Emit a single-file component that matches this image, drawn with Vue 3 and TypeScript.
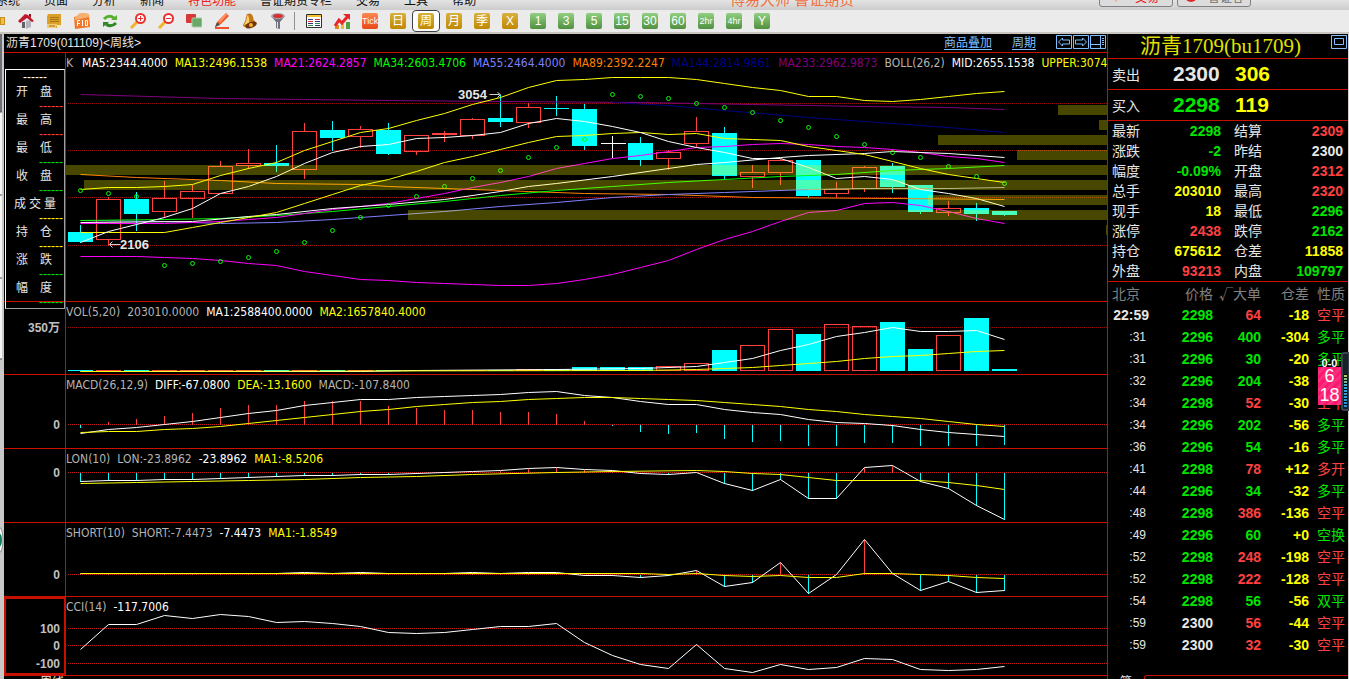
<script setup lang="ts">
type Tone = 'red' | 'green' | 'yellow' | 'white'
interface Legend { text: string; color: string }
interface Level { y: number; label?: string; dark?: boolean }
interface Line { color: string; pts: [number, number][] }
interface Stick { i: number; y: number; up: boolean }
interface Pane { id: string; top: number; height: number; legend: Legend[]; levels: Level[]; zero: number; lines: Line[]; sticks: Stick[] }

const RED = '#ff4040'
const CYAN = '#00ffff'
const GRAY = '#b4b4b4'
const WHITE = '#ffffff'
const YELLOW = '#ffff00'

const menus = ['系统', '页面', '分析', '新闻', '特色功能', '鲁证期货专栏', '交易', '工具', '帮助']
const periods = ['日', '周', '月', '季', 'X']
const minutes = ['1', '3', '5', '15', '30', '60', '2hr', '4hr', 'Y']

const xAt = (i: number) => 80 + 28 * i
const seq = (ys: number[], from = 0): [number, number][] => ys.map((y, k) => [from + k, y])
const path = (pts: [number, number][]) => pts.map(([i, y]) => `${xAt(i)},${y}`).join(' ')
const sticksTo = (ys: number[], zero: number): Stick[] =>
  ys.map((y, i) => ({ i, y, up: y < zero })).filter((s) => s.y !== zero)

// high, body top, body bottom, low, kind (r: rising, f: falling, n: unchanged)
const candles: [number, number, number, number, string][] = [
  [224, 232, 242, 242, 'f'], [196, 199, 239, 245, 'r'], [191, 199, 214, 230, 'f'], [180, 198, 211, 217, 'r'],
  [184, 191, 198, 217, 'r'], [160, 166, 193, 193, 'r'], [148, 163, 165, 168, 'r'], [144, 163, 166, 171, 'f'],
  [122, 131, 169, 178, 'r'], [120, 130, 138, 150, 'f'], [125, 129, 136, 147, 'r'], [122, 130, 154, 154, 'f'],
  [134, 135, 151, 154, 'r'], [130, 133, 134, 141, 'r'], [117, 119, 135, 138, 'r'], [94, 118, 122, 126, 'f'],
  [102, 107, 122, 127, 'r'], [95, 108, 109, 115, 'f'], [103, 109, 146, 149, 'f'], [135, 143, 144, 157, 'n'],
  [136, 143, 160, 165, 'f'], [149, 152, 158, 169, 'r'], [116, 131, 143, 147, 'r'], [126, 133, 176, 179, 'f'],
  [164, 172, 176, 187, 'r'], [158, 160, 172, 184, 'r'], [159, 160, 196, 197, 'f'], [181, 189, 193, 197, 'r'],
  [165, 167, 188, 191, 'r'], [162, 166, 187, 192, 'f'], [184, 185, 212, 213, 'f'], [200, 208, 212, 215, 'r'],
  [202, 208, 214, 220, 'f'], [210, 211, 215, 215, 'f'],
]

const volumeTops = [370, 370, 370, 370, 370, 370, 370, 370, 370, 370, 370, 370, 370, 370, 370, 370, 369, 369, 367, 367, 367, 366, 363, 350, 345, 329, 334, 324, 326, 322, 349, 335, 318, 369]

// x, y, with up to the right edge of the plot
const zones: [number, number][] = [
  [1058, 105], [1099, 120], [938, 135], [1017, 150], [66, 165], [84, 180], [928, 195], [408, 210], [1106, 225],
]

const sar = [190, 193, 196, 265, 263, 261, 257, 251, 242, 230, 217, 205, 196, 186, 178, 170, 157, 147, 139, 94, 96, 98, 103, 107, 112, 120, 127, 136, 144, 152, 157, 166, 176, 183]

const mainLines: Line[] = [
  { color: '#800080', pts: [[0, 94], [5, 98], [11, 100], [15, 101], [20, 102], [24, 104], [28, 106], [31, 107], [33, 109]] },
  { color: '#000080', pts: [[19, 102], [21, 105], [23, 110], [26, 117], [28, 121], [31, 127], [33, 132]] },
  { color: '#ff8000', pts: [[0, 174], [2, 177], [5, 180], [7, 183], [10, 184], [11, 186], [13, 188], [16, 191], [18, 193], [21, 194], [24, 197], [29, 198], [33, 199]] },
  { color: '#8080ff', pts: [[0, 220], [3, 221], [5, 223], [7, 222], [9, 219], [11, 215], [13, 211], [15, 206], [17, 202], [19, 197], [21, 194], [23, 192], [26, 189]] },
  { color: '#a0a0b0', pts: [[26, 189], [28, 188], [31, 188], [33, 187]] },
  { color: '#00ff00', pts: [[0, 220], [3, 219], [5, 218], [7, 215], [9, 211], [11, 206], [13, 201], [15, 195], [17, 190], [19, 186], [21, 182], [23, 179], [25, 176], [27, 174], [29, 170], [31, 168], [33, 165]] },
  { color: '#ff00ff', pts: seq([223, 223, 223, 223, 222, 221, 219, 217, 213, 209, 206, 203, 198, 193, 187, 182, 176, 168, 163, 158, 155, 151, 147, 146, 144, 143, 144, 146, 147, 149, 152, 156, 158, 162]) },
  { color: WHITE, pts: [[0, 222], [4, 221], [6, 216], [7, 214], [9, 208], [11, 204], [13, 199], [15, 191], [16, 186], [17, 183], [19, 176], [21, 168], [22, 164], [23, 162], [25, 157], [26, 155], [28, 153], [29, 151], [31, 153], [33, 157]] },
  { color: '#ff00ff', pts: seq([256, 256, 256, 257, 258, 260, 263, 265, 271, 275, 279, 280, 282, 283, 284, 285, 285, 283, 279, 274, 267, 260, 249, 239, 231, 221, 212, 210, 203, 202, 205, 211, 218, 223]) },
  { color: YELLOW, pts: seq([189, 187, 187, 186, 184, 175, 168, 162, 150, 141, 132, 128, 120, 113, 104, 97, 87, 80, 79, 77, 77, 77, 79, 83, 87, 90, 96, 96, 100, 101, 99, 96, 93, 91]) },
  { color: YELLOW, pts: seq([232, 232, 232, 232, 227, 222, 217, 212, 203, 194, 185, 179, 171, 162, 156, 149, 142, 136, 135, 133, 132, 134, 133, 138, 139, 140, 146, 150, 154, 161, 168, 174, 178, 182]) },
  { color: WHITE, pts: seq([242, 231, 224, 217, 208, 193, 186, 176, 163, 152, 146, 144, 138, 137, 135, 132, 123, 118, 121, 126, 132, 141, 147, 152, 158, 158, 167, 178, 176, 179, 189, 193, 198, 206]) },
]

const lon = [481, 480, 480, 479, 479, 478, 477, 476, 475, 475, 474, 474, 473, 472, 471, 470, 468, 467, 469, 470, 473, 474, 472, 483, 490, 479, 498, 498, 467, 465, 481, 488, 505, 519]
const short = [573, 573, 573, 573, 573, 573, 573, 573, 572, 573, 572, 573, 573, 573, 572, 573, 572, 572, 575, 575, 577, 575, 570, 586, 582, 562, 593, 574, 539, 573, 590, 581, 592, 590]
const macdHist = [427, 421, 418, 415, 412, 407, 404, 404, 400, 400, 400, 405, 407, 409, 409, 411, 411, 413, 420, 425, 431, 433, 432, 438, 441, 440, 445, 445, 442, 442, 445, 445, 445, 444]

const mainLegend: Legend[] = [
  { text: 'K', color: GRAY },
  { text: 'MA5:2344.4000', color: WHITE },
  { text: 'MA13:2496.1538', color: YELLOW },
  { text: 'MA21:2624.2857', color: '#ff00ff' },
  { text: 'MA34:2603.4706', color: '#00ff00' },
  { text: 'MA55:2464.4000', color: '#8080ff' },
  { text: 'MA89:2392.2247', color: '#ff8000' },
  { text: 'MA144:2814.9861', color: '#000090' },
  { text: 'MA233:2962.9873', color: '#800080' },
  { text: 'BOLL(26,2)', color: GRAY },
  { text: 'MID:2655.1538', color: WHITE },
  { text: 'UPPER:3074', color: YELLOW },
]

const panes: Pane[] = [
  {
    id: 'vol', top: 302, height: 72, zero: 0, sticks: [],
    legend: [
      { text: 'VOL(5,20)', color: GRAY }, { text: '203010.0000', color: GRAY },
      { text: 'MA1:2588400.0000', color: WHITE }, { text: 'MA2:1657840.4000', color: YELLOW },
    ],
    levels: [{ y: 327, label: '350万', dark: true }],
    lines: [
      { color: WHITE, pts: [[0, 371], [10, 371], [12, 370], [17, 369], [20, 368], [22, 366], [23, 362], [24, 358], [25, 350], [26, 344], [27, 336], [28, 332], [29, 327], [30, 331], [31, 331], [32, 330], [33, 339]] },
      { color: YELLOW, pts: [[0, 371], [20, 370], [22, 369], [23, 368], [24, 367], [25, 365], [26, 363], [27, 361], [28, 358], [29, 356], [30, 355], [31, 353], [32, 351], [33, 350]] },
    ],
  },
  {
    id: 'macd', top: 375, height: 73, zero: 424, sticks: sticksTo(macdHist, 424),
    legend: [
      { text: 'MACD(26,12,9)', color: GRAY }, { text: 'DIFF:-67.0800', color: WHITE },
      { text: 'DEA:-13.1600', color: YELLOW }, { text: 'MACD:-107.8400', color: GRAY },
    ],
    levels: [{ y: 424, label: '0' }],
    lines: [
      { color: WHITE, pts: seq([433, 429, 427, 424, 421, 417, 413, 410, 405, 402, 399, 399, 397, 396, 395, 394, 392, 391, 395, 397, 401, 404, 404, 409, 412, 414, 419, 422, 423, 425, 429, 432, 434, 436]) },
      { color: YELLOW, pts: seq([432, 431, 431, 429, 428, 426, 423, 420, 417, 414, 411, 409, 406, 404, 402, 401, 399, 398, 397, 397, 398, 399, 400, 402, 404, 406, 409, 411, 414, 416, 418, 421, 424, 426]) },
    ],
  },
  {
    id: 'lon', top: 449, height: 73, zero: 472, sticks: sticksTo(lon, 472),
    legend: [
      { text: 'LON(10)', color: GRAY }, { text: 'LON:-23.8962', color: GRAY },
      { text: '-23.8962', color: WHITE }, { text: 'MA1:-8.5206', color: YELLOW },
    ],
    levels: [{ y: 472, label: '0' }],
    lines: [
      { color: WHITE, pts: seq(lon) },
      { color: YELLOW, pts: [[0, 483], [2, 482], [4, 481], [6, 480], [8, 479], [10, 477], [12, 476], [14, 474], [17, 472], [19, 471], [22, 470], [23, 471], [24, 473], [25, 474], [26, 477], [27, 480], [30, 480], [31, 482], [32, 485], [33, 489]] },
    ],
  },
  {
    id: 'short', top: 523, height: 73, zero: 574, sticks: sticksTo(short, 574),
    legend: [
      { text: 'SHORT(10)', color: GRAY }, { text: 'SHORT:-7.4473', color: GRAY },
      { text: '-7.4473', color: WHITE }, { text: 'MA1:-1.8549', color: YELLOW },
    ],
    levels: [{ y: 574, label: '0' }],
    lines: [
      { color: WHITE, pts: seq(short) },
      { color: YELLOW, pts: [[0, 573], [20, 573], [21, 574], [22, 573], [23, 575], [24, 576], [25, 575], [26, 577], [27, 577], [28, 573], [29, 573], [30, 574], [31, 575], [32, 577], [33, 578]] },
    ],
  },
  {
    id: 'cci', top: 597, height: 78, zero: 645, sticks: [],
    legend: [{ text: 'CCI(14)', color: GRAY }, { text: '-117.7006', color: WHITE }],
    levels: [{ y: 628, label: '100' }, { y: 645, label: '0' }, { y: 663, label: '-100' }],
    lines: [
      { color: WHITE, pts: seq([649, 624, 624, 615, 618, 614, 616, 622, 621, 623, 626, 632, 633, 632, 629, 626, 626, 623, 642, 655, 664, 668, 644, 668, 672, 664, 669, 667, 658, 659, 669, 670, 669, 666]) },
    ],
  },
]

const cursorInfo = [
  { name: '开 盘', tone: 'red' }, { name: '最 高', tone: 'red' }, { name: '最 低', tone: 'green' }, { name: '收 盘', tone: 'green' },
  { name: '成交量', tone: 'yellow' }, { name: '持 仓', tone: 'yellow' }, { name: '涨 跌', tone: 'green' }, { name: '幅 度', tone: 'green' },
].map((r) => ({ ...r, chars: r.name.replace(' ', '').split('') }))

const quotes: [string, string, Tone, string, string, Tone][] = [
  ['最新', '2298', 'green', '结算', '2309', 'red'],
  ['涨跌', '-2', 'green', '昨结', '2300', 'white'],
  ['幅度', '-0.09%', 'green', '开盘', '2312', 'red'],
  ['总手', '203010', 'yellow', '最高', '2320', 'red'],
  ['现手', '18', 'yellow', '最低', '2296', 'green'],
  ['涨停', '2438', 'red', '跌停', '2162', 'green'],
  ['持仓', '675612', 'yellow', '仓差', '11858', 'yellow'],
  ['外盘', '93213', 'red', '内盘', '109797', 'green'],
]

const ticks: [string, string, Tone, string, Tone, string, string, Tone][] = [
  ['22:59', '2298', 'green', '64', 'red', '-18', '空平', 'red'],
  [':31', '2296', 'green', '400', 'green', '-304', '多平', 'green'],
  [':31', '2296', 'green', '30', 'green', '-20', '多平', 'green'],
  [':32', '2296', 'green', '204', 'green', '-38', '多平', 'green'],
  [':34', '2298', 'green', '52', 'red', '-30', '空平', 'red'],
  [':34', '2296', 'green', '202', 'green', '-56', '多平', 'green'],
  [':36', '2296', 'green', '54', 'green', '-16', '多平', 'green'],
  [':41', '2298', 'green', '78', 'red', '+12', '多开', 'red'],
  [':44', '2296', 'green', '34', 'green', '-32', '多平', 'green'],
  [':48', '2298', 'green', '386', 'red', '-136', '空平', 'red'],
  [':49', '2296', 'green', '60', 'green', '+0', '空换', 'green'],
  [':52', '2298', 'green', '248', 'red', '-198', '空平', 'red'],
  [':52', '2298', 'green', '222', 'red', '-128', '空平', 'red'],
  [':54', '2298', 'green', '56', 'green', '-56', '双平', 'green'],
  [':59', '2300', 'white', '56', 'red', '-44', '空平', 'red'],
  [':59', '2300', 'white', '32', 'red', '-30', '空平', 'red'],
]
</script>

<template>
  <div class="app">
    <header class="menubar">
      <nav class="menus">
        <a v-for="m in menus" :key="m" href="#" :class="{ hot: m === '特色功能' }">{{ m }}</a>
      </nav>
      <span class="brand">博易大师 鲁证期货</span>
      <div class="menu-actions">
        <button type="button" class="action trade">
          <svg width="12" height="14" viewBox="0 0 12 14"><path d="M8 0 2 7h3l-3 6 8-8H6l4-5z" fill="#f06020" /></svg>交易
        </button>
        <button type="button" class="action">
          <svg width="14" height="14" viewBox="0 0 14 14"><circle cx="7" cy="7" r="6" fill="#e02828" /><path d="M2 6q5-4 10 0M4 9q3-3 6 0" stroke="#fff" fill="none" /></svg>鲁证客
        </button>
      </div>
    </header>

    <div class="toolbar">
      <span class="edge-icon" />
      <button type="button" aria-label="首页">
        <svg viewBox="0 0 16 16"><path d="M3 7h10v8H3z" fill="#e4e4e8" /><path d="M8 8l5-1v7l-5 2z" fill="#b4b4bc" /><path d="M4 9h3v6H4z" fill="#606068" /><path d="M0 8 7 1l3 1 6 6-2 1-5-4-7 5z" fill="#c01828" /><path d="M11 1h2v4l-2-2z" fill="#901020" /></svg>
      </button>
      <button type="button" aria-label="公告">
        <svg viewBox="0 0 16 16"><path d="M2 1h13v11l-4 3H1V4z" fill="#dca028" /><path d="M1 11h10l-1 4H1z" fill="#f0cc70" /><path d="M4 4.500h9M4 6.500h9M4 8.500h9M3 13h6" stroke="#a87418" /><path d="M11 15v-3h4z" fill="#fff0b0" /></svg>
      </button>
      <button type="button" aria-label="F10">
        <svg viewBox="0 0 16 16"><path d="M0 4 15 1l1 13-15 2z" fill="#f07828" /><path d="M1 4 6 0h6l3 1v3L1 7z" fill="#f8b070" /><path d="M3.500 13V7.500H6M3.500 10.500H6M8.500 7v6M11.500 7.500h2v5h-2z" stroke="#fff" fill="none" /></svg>
      </button>
      <button type="button" aria-label="刷新">
        <svg viewBox="0 0 16 16" fill="none" stroke-width="3"><path d="M2 6q5-5 10-1" stroke="#58b030" /><path d="M14 10q-5 5-10 1" stroke="#308828" /><path d="M9 7h6V2z" fill="#58b030" /><path d="M7 9H1v5z" fill="#308828" /></svg>
      </button>
      <button type="button" aria-label="放大">
        <svg viewBox="0 0 16 16" fill="none"><path d="M7 9 1 15" stroke="#f0b428" stroke-width="3" /><circle cx="10.500" cy="5.500" r="4.500" fill="#fff" stroke="#e83030" stroke-width="2" /><path d="M8 5.500h5M10.500 3v5" stroke="#e83030" /></svg>
      </button>
      <button type="button" aria-label="缩小">
        <svg viewBox="0 0 16 16" fill="none"><path d="M7 9 1 15" stroke="#f0b428" stroke-width="3" /><circle cx="10.500" cy="5.500" r="4.500" fill="#fff" stroke="#e83030" stroke-width="2" /><path d="M8 5.500h5" stroke="#e83030" /></svg>
      </button>
      <button type="button" aria-label="叠加">
        <svg viewBox="0 0 16 16"><rect x="0" y="1" width="10" height="9" rx="1" fill="#d83838" /><rect x="6" y="5" width="10" height="9" rx="1" fill="#68a868" stroke="#a8d0a0" /></svg>
      </button>
      <button type="button" aria-label="画线">
        <svg viewBox="0 0 16 16"><path d="M1 14 4 8 12 0l3 3-8 8z" fill="#f05820" /><path d="M4 8 12 0l1 2-7 8z" fill="#ff9068" /><path d="M1 14l2-5 3 3z" fill="#505050" /><path d="M1 15h14" stroke="#f05030" stroke-width="2" /></svg>
      </button>
      <button type="button" aria-label="预警">
        <svg viewBox="0 0 16 16"><path d="M5 1q5-2 6 3 0 4 4 6L4 14q-3 0-3-2 3-4 3-8z" fill="#c87818" /><path d="M6 2q2 4 1 8l-5 2q3-4 3-9z" fill="#f8d070" /><ellipse cx="9" cy="12" rx="6" ry="3" fill="#703408" transform="rotate(-20 9 12)" /><circle cx="9" cy="12" r="2" fill="#f0b030" /></svg>
      </button>
      <button type="button" aria-label="筛选">
        <svg viewBox="0 0 16 16"><path d="M1 3 6 9v6l4 1V9l5-6z" fill="#70707c" /><path d="M7 9h1v6H7z" fill="#e0e0e4" /><ellipse cx="8" cy="3" rx="7" ry="3" fill="#a8a8b0" /><ellipse cx="8" cy="3" rx="5" ry="2" fill="#d83030" /></svg>
      </button>
      <span class="sep" />
      <button type="button" aria-label="报价表">
        <svg viewBox="0 0 16 16"><path d="M.5 1.500h15v13H.5z" fill="#fff" stroke="#303030" /><path d="M1 2h14v2H1z" fill="#f8c030" /><path d="M2 6.500h5M2 10.500h5M9 8.500h5M9 12.500h5" stroke="#303080" /><path d="M2 8.500h5M9 6.500h5" stroke="#d83030" /><path d="M2 12.500h5M9 10.500h5" stroke="#289048" /></svg>
      </button>
      <button type="button" aria-label="走势">
        <svg viewBox="0 0 16 16"><path d="M1 12h4v4H1z" fill="#d89018" /><path d="M7 11h3v5H7z" fill="#e8b840" /><path d="M12 9h4v7h-4z" fill="#50a040" /><path d="M1 13 5 7l3 3 6-7" fill="none" stroke="#e82828" stroke-width="3" /><path d="M9 1h7v6z" fill="#e82828" /></svg>
      </button>
      <button type="button"><span class="chip tick">Tick</span></button>
      <button v-for="p in periods" :key="p" type="button" :class="{ active: p === '周' }"><span class="chip gold">{{ p }}</span></button>
      <button v-for="p in minutes" :key="p" type="button"><span class="chip leaf" :class="{ tiny: p.length > 2 }">{{ p }}</span></button>
    </div>

    <main class="body">
      <div class="rail">
        <svg width="4" height="645" viewBox="0 34 4 645">
          <path d="M0 34h2v78H0z" fill="#707078" /><path d="M0 112h2v247H0z" fill="#f4f4f0" /><path d="M0 112h2M0 195h2M0 278h2M0 359h2" stroke="#505058" />
          <ellipse cx="-1" cy="540" rx="4" ry="13" fill="#fff" stroke="#888" /><ellipse cx="-1" cy="540" rx="3" ry="7" fill="#108060" />
        </svg>
      </div>

      <section class="charts">
        <div class="chart-head">
          <h1>沥青1709(011109)&lt;周线&gt;</h1>
          <div class="chart-tools">
            <a href="#">商品叠加</a>
            <a href="#">周期</a>
            <div class="boxes">
              <button type="button" aria-label="左移"><svg viewBox="0 0 16 14"><path d="M.5.5h15v13H.5zM2.500 7 6.500 3v2h7v4h-7v2z" /></svg></button>
              <button type="button" aria-label="右移"><svg viewBox="0 0 16 14"><path d="M.5.5h15v13H.5zM13.500 7 9.500 3v2h-7v4h7v2z" /></svg></button>
              <button type="button" aria-label="分栏"><svg viewBox="0 0 16 14"><path d="M.5.5h15v13H.5zM1 9.500h10M10.500 1v12M12 3.500h2M12 5.500h2M12 7.500h2M12 9.500h2" /></svg></button>
            </div>
          </div>
        </div>

        <div class="pane">
          <div class="axis">
            <div class="cursor-box">
              <div class="cursor-date">------</div>
              <template v-for="r in cursorInfo" :key="r.name">
                <div class="cursor-name"><span v-for="c in r.chars" :key="c">{{ c }}</span></div>
                <div class="cursor-value" :class="r.tone">------</div>
              </template>
            </div>
          </div>
          <div class="plot">
            <svg viewBox="66 53 1041 248" preserveAspectRatio="none">
              <g transform="translate(0.5 0.5)">
                <path class="level dark" d="M67 103H1107M67 150H1107M67 197H1107M67 245H1107" />
                <g v-for="(c, i) in candles" :key="i" class="crisp">
                  <template v-if="c[4] === 'r'">
                    <path :d="`M${xAt(i)} ${c[0]}V${c[1]}M${xAt(i)} ${c[2]}V${c[3]}`" :stroke="RED" />
                    <rect :x="xAt(i) - 12" :y="c[1]" width="24" :height="c[2] - c[1]" fill="none" :stroke="RED" />
                  </template>
                  <template v-else-if="c[4] === 'f'">
                    <path :d="`M${xAt(i)} ${c[0]}V${c[3]}`" :stroke="CYAN" />
                    <rect :x="xAt(i) - 12.5" :y="c[1] - 0.5" width="25" :height="c[2] - c[1]" :fill="CYAN" />
                  </template>
                  <path v-else :d="`M${xAt(i)} ${c[0]}V${c[3]}M${xAt(i) - 12} ${c[1]}h25`" :stroke="WHITE" />
                </g>
                <polyline v-for="(l, k) in mainLines" :key="k" :points="path(l.pts)" :stroke="l.color" />
                <circle v-for="(y, i) in sar" :key="'s' + i" :cx="xAt(i)" :cy="y" r="2" stroke="#00ff00" />
                <rect v-for="(z, k) in zones" :key="'z' + k" :x="z[0] - 0.5" :y="z[1] - 0.5" :width="1107 - z[0]" height="10" fill="#ffff00" fill-opacity="0.28" />
                <path d="M109 244h11M112 241l-3 3 3 3M489 94h10M497 92l3 2-3 3" fill="none" stroke="#d0d0d0" />
              </g>
              <text x="120" y="249">2106</text>
              <text x="458" y="99">3054</text>
            </svg>
            <div class="legend main-legend"><span v-for="l in mainLegend" :key="l.text" :style="{ color: l.color }">{{ l.text }}</span></div>
          </div>
        </div>

        <div v-for="p in panes" :key="p.id" class="pane">
          <div class="axis" :class="{ selected: p.id === 'cci' }">
            <svg :viewBox="`4 ${p.top} 61 ${p.height}`" preserveAspectRatio="xMaxYMid meet">
              <text v-for="l in p.levels" :key="l.y" x="60" :y="l.y + 5" text-anchor="end">{{ l.label }}</text>
            </svg>
          </div>
          <div class="plot">
            <svg :viewBox="`66 ${p.top} 1041 ${p.height}`" preserveAspectRatio="none">
              <g transform="translate(0.5 0.5)">
                <path v-for="l in p.levels" :key="l.y" class="level" :class="{ dark: l.dark }" :d="`M67 ${l.y}H1107`" />
                <template v-if="p.id === 'vol'">
                  <g v-for="(y, i) in volumeTops" :key="i" class="crisp">
                    <path v-if="y >= 370" :d="`M${xAt(i) - 12.5} ${y}h25`" :stroke="candles[i][4] === 'r' ? RED : CYAN" />
                    <rect v-else-if="candles[i][4] === 'r'" :x="xAt(i) - 12" :y="y" width="24" :height="370 - y" fill="none" :stroke="RED" />
                    <rect v-else :x="xAt(i) - 12.5" :y="y - 0.5" width="25" :height="371 - y" :fill="CYAN" />
                  </g>
                </template>
                <path v-for="s in p.sticks" :key="'k' + s.i" class="crisp" :d="`M${xAt(s.i)} ${p.zero}V${s.y}`" :stroke="s.up ? RED : CYAN" />
                <polyline v-for="(l, k) in p.lines" :key="'l' + k" :points="path(l.pts)" :stroke="l.color" />
              </g>
            </svg>
            <div class="legend"><span v-for="l in p.legend" :key="l.text" :style="{ color: l.color }">{{ l.text }}</span></div>
          </div>
        </div>
        <div class="foot"><span>周线</span></div>
      </section>

      <aside class="quote">
        <div class="quote-head">
          <h2>沥青1709(bu1709)</h2>
          <button type="button" aria-label="最大化"><svg width="16" height="14" viewBox="0 0 16 14"><path d="M.5.500h15v13H.5zM3.500 3.500h9v6h-9z" fill="none" stroke="#80c0ff" /></svg></button>
        </div>
        <div class="bid-ask"><span class="name">卖出</span><b class="white">2300</b><b class="yellow">306</b></div>
        <div class="bid-ask"><span class="name">买入</span><b class="green">2298</b><b class="yellow">119</b></div>
        <table class="facts">
          <colgroup><col class="c-name"><col class="c-value"><col class="c-name2"><col></colgroup>
          <tbody>
            <tr v-for="q in quotes" :key="q[0]">
              <th scope="row">{{ q[0] }}</th><td :class="q[2]">{{ q[1] }}</td>
              <th scope="row" class="second">{{ q[3] }}</th><td class="last" :class="q[5]">{{ q[4] }}</td>
            </tr>
          </tbody>
        </table>
        <table class="ticks">
          <colgroup><col class="t-time"><col class="t-price"><col class="t-vol"><col class="t-vol"><col></colgroup>
          <thead><tr><th scope="col" class="left">北京</th><th scope="col">价格</th><th scope="col">√大单</th><th scope="col">仓差</th><th scope="col" class="kind">性质</th></tr></thead>
          <tbody>
            <tr v-for="(t, i) in ticks" :key="i">
              <td class="time" :class="{ first: i === 0 }">{{ t[0] }}</td>
              <td :class="t[2]">{{ t[1] }}</td><td :class="t[4]">{{ t[3] }}</td><td class="yellow">{{ t[5] }}</td>
              <td class="kind" :class="t[7]">{{ t[6] }}</td>
            </tr>
          </tbody>
        </table>
        <div class="quote-foot"><span class="tab">笔</span><span class="tab-line" /></div>
      </aside>
    </main>

    <div class="widget">
      <div class="widget-card"><span class="eyes">0-0</span><span class="face">6<br>18</span></div>
      <div class="meter"><span /></div>
    </div>
  </div>
</template>

<style>
html, body { background: #000; overflow: hidden; }
</style>

<style scoped>
.app {
  display: flex;
  flex-direction: column;
  height: 100vh;
  overflow: hidden;
  background: #000;
  color: #e6e6e6;
  font-family: "Liberation Sans", "Noto Sans CJK SC", sans-serif;
  font-size: 14px;
}
button { border: 0; padding: 0; background: none; font: inherit; color: inherit; }
h1, h2 { margin: 0; font-weight: 400; }
.red { color: #ff4040; }
.green { color: #00e600; }
.yellow { color: #ffff00; }
.white { color: #e6e6e6; }

.menubar {
  display: flex;
  align-items: flex-end;
  flex: 0 0 10px;
  height: 10px;
  overflow: hidden;
  background: linear-gradient(#e4e4e4, #cccccc);
}
.menus { display: flex; gap: 24px; margin-left: -4px; width: 734px; padding-bottom: 1px; }
.menus a { color: #101010; font-size: 12px; line-height: 16px; text-decoration: none; white-space: nowrap; }
.menus a.hot { color: #f01818; }
.brand { flex: 1; padding-bottom: 1px; color: #f07040; font-size: 15px; line-height: 18px; white-space: nowrap; }
.menu-actions { display: flex; gap: 4px; margin: 0 98px 3px 0; }
.action {
  display: flex;
  align-items: center;
  justify-content: center;
  gap: 10px;
  box-sizing: border-box;
  width: 74px;
  height: 22px;
  border: 1px solid #808080;
  border-radius: 3px;
  background: #dcdcdc;
  color: #707070;
  font-size: 12px;
}
.trade { color: #e82020; }

.toolbar {
  display: flex;
  flex: 0 0 24px;
  box-sizing: border-box;
  border-bottom: 2px solid #c8c4c0;
  background: #ebebeb;
}
.edge-icon { width: 5px; height: 8px; margin: 7px 7px 0 0; background: #f0c040; box-shadow: inset 0 0 0 1px #c89020; }
.toolbar button { display: flex; align-items: center; justify-content: center; box-sizing: border-box; width: 28px; height: 22px; }
.toolbar button svg { width: 16px; height: 16px; }
.toolbar button.active { border: 1px solid #404048; border-radius: 4px; background: #fff; }
.sep { width: 1px; height: 18px; margin: 2px 5px 0 2px; background: #909090; }
.chip {
  width: 16px;
  height: 16px;
  border-radius: 2px;
  color: #fff;
  font-size: 12px;
  line-height: 16px;
  text-align: center;
  white-space: nowrap;
}
.chip.gold { background: linear-gradient(#d8b040, #c08800); }
.chip.leaf { background: linear-gradient(#90d080, #509040); }
.chip.tick { background: linear-gradient(#ff8850, #e84818); font-size: 9px; }
.chip.tiny { font-size: 9px; }

.body { display: flex; flex: 1; min-height: 0; }
.rail { flex: 0 0 4px; overflow: hidden; background: #c8c8c8; }
.rail svg { display: block; }
.charts {
  display: grid;
  flex: 1;
  min-width: 0;
  grid-template-rows: 19px 249fr 73fr 74fr 74fr 74fr 79fr 3px;
}
.chart-head {
  display: flex;
  justify-content: space-between;
  box-sizing: border-box;
  border-bottom: 1px solid #c81000;
  padding: 0 1px 0 2px;
}
.chart-head h1 { font-size: 12px; line-height: 18px; white-space: nowrap; }
.chart-tools { display: flex; gap: 20px; }
.chart-tools a { color: #80c0ff; font-size: 12px; line-height: 18px; text-underline-offset: 2px; }
.boxes { display: flex; gap: 1px; padding-top: 1px; }
.boxes button { width: 16px; height: 14px; }
.boxes svg { display: block; width: 16px; height: 14px; fill: none; stroke: #80c0ff; }

.pane {
  display: grid;
  grid-template-columns: 62px minmax(0, 1fr);
  grid-template-rows: minmax(0, 1fr);
  min-height: 0;
  border-bottom: 1px solid #c81000;
}
.axis { box-sizing: border-box; min-height: 0; border-right: 1px solid #c81000; }
.axis.selected { outline: 2px solid #c81000; outline-offset: -2px; }
.axis svg { display: block; width: 100%; height: 100%; fill: #c0c0c0; font: bold 12px "Liberation Sans", "Noto Sans CJK SC", sans-serif; }
.plot { display: grid; grid-template-rows: minmax(0, 1fr); grid-template-columns: minmax(0, 1fr); min-height: 0; overflow: hidden; }
.plot > * { grid-area: 1 / 1; }
.plot svg { display: block; width: 100%; height: 100%; }
.plot polyline, .plot circle { fill: none; stroke-width: 1; }
.plot text { fill: #e6e6e6; font: bold 13px "Liberation Sans", sans-serif; }
.level { stroke: #c81818; stroke-dasharray: 1 1; shape-rendering: crispEdges; }
.level.dark { stroke: #980c0c; }
.crisp { shape-rendering: crispEdges; }
.legend {
  display: flex;
  gap: 7px;
  align-self: start;
  min-width: 0;
  padding-top: 2px;
  font: 12px "DejaVu Sans Condensed", "DejaVu Sans", sans-serif;
  line-height: 16px;
  white-space: nowrap;
}
.main-legend span:first-child { margin-right: 2px; }

.cursor-box {
  box-sizing: border-box;
  width: 60px;
  height: 240px;
  margin: 16px 0 0 1px;
  border: 1px solid #fff;
  border-right-color: #a0a0a0;
  border-bottom-color: #a0a0a0;
  font-size: 12px;
}
.cursor-date { padding-top: 2px; color: #fff; line-height: 11px; text-align: center; }
.cursor-name { display: flex; justify-content: space-between; padding: 0 12px 0 10px; line-height: 18px; }
.cursor-name:has(span:nth-child(3)) { padding: 0 8px; }
.cursor-value { padding-right: 1px; line-height: 10px; text-align: right; }

.foot { overflow: hidden; padding-left: 36px; font-size: 12px; }
.foot span { display: block; line-height: 12px; }

.quote { display: flex; flex: 0 0 242px; flex-direction: column; box-sizing: border-box; border-left: 1px solid #c81000; border-right: 1px solid #d8d0d0; }
.quote-head { display: flex; flex: 0 0 25px; box-sizing: border-box; justify-content: space-between; border-bottom: 1px solid #c81000; padding: 1px 1px 0 32px; }
.quote-head h2 { color: #e0e000; font: 21px "Liberation Serif", "Noto Sans CJK SC", serif; line-height: 22px; white-space: nowrap; }
.quote-head button { height: 14px; }
.quote-head svg { display: block; }
.bid-ask { display: grid; grid-template-columns: 61px 62px 1fr; align-items: center; flex: 0 0 31px; box-sizing: border-box; border-bottom: 1px solid #c81000; padding-left: 4px; }
.bid-ask b { font-size: 21px; line-height: 24px; }
table { width: 100%; border-collapse: collapse; table-layout: fixed; }
th { padding: 0; font-weight: 400; text-align: left; }
td { padding: 0; font-weight: 700; text-align: right; }
.facts { border-bottom: 1px solid #c81000; }
.facts tr { height: 20px; line-height: 20px; }
.facts th { padding-left: 4px; }
.facts th.second { padding-left: 13px; }
.facts td.last { padding-right: 5px; }
.c-name { width: 43px; }
.c-value { width: 70px; }
.c-name2 { width: 56px; }
.t-time { width: 41px; }
.t-price { width: 64px; }
.t-vol { width: 48px; }
.ticks tr { height: 22px; line-height: 22px; }
.ticks th { color: #808080; font-family: "Noto Sans CJK SC", sans-serif; text-align: right; white-space: nowrap; }
.ticks th.left { padding-left: 4px; text-align: left; }
.ticks .kind { padding-right: 3px; font-weight: 400; }
.ticks .time { padding-right: 3px; font-size: 12px; font-weight: 400; }
.ticks .time.first { padding-right: 0; font-size: 14px; font-weight: 700; }
.quote-foot { display: flex; flex: 1; align-items: flex-end; overflow: hidden; }
.tab { height: 4px; margin-left: 12px; font-size: 12px; line-height: 14px; }
.tab-line { flex: 1; height: 3px; margin-left: 12px; border-top: 1px solid #c81000; border-left: 1px solid #c81000; border-radius: 3px 0 0 0; }

.widget { position: absolute; right: 0; top: 352px; display: flex; align-items: flex-start; }
.widget-card { display: flex; flex-direction: column; align-items: center; width: 23px; padding-top: 7px; }
.eyes { color: #fff; font: bold 11px "Liberation Sans", sans-serif; line-height: 8px; text-shadow: 0 0 1px #000, 0 0 1px #000; }
.face { width: 23px; height: 38px; background: repeating-linear-gradient(135deg, #ff1870 0 3px, #f83080 3px 6px); color: #fff; font-size: 18px; line-height: 19px; text-align: center; }
.meter { box-sizing: border-box; width: 8px; height: 59px; border: 2px solid #384450; border-right-width: 1px; border-radius: 3px 0 0 3px; background: #182028; padding: 20px 1px 2px; }
.meter span { display: block; height: 33px; background: repeating-linear-gradient(#000 0 1px, transparent 1px 3px), linear-gradient(#c8d840, #30a8e0 40%, #2090d8); }
</style>
